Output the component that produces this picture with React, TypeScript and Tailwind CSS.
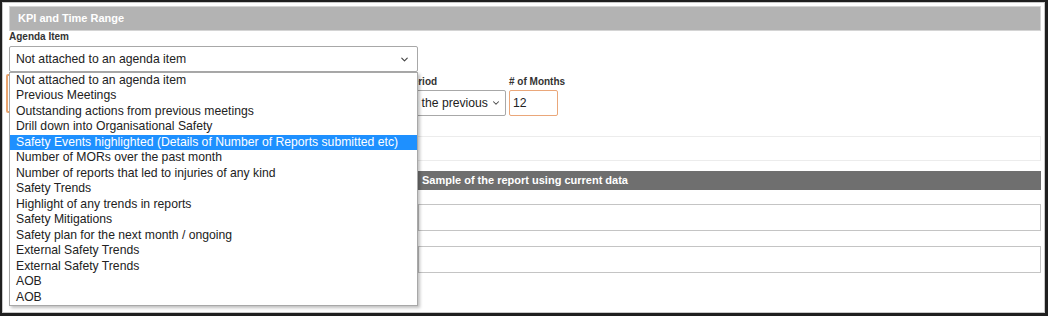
import { ChevronDown } from 'lucide-react';

const agendaItems = [
  'Not attached to an agenda item',
  'Previous Meetings',
  'Outstanding actions from previous meetings',
  'Drill down into Organisational Safety',
  'Safety Events highlighted (Details of Number of Reports submitted etc)',
  'Number of MORs over the past month',
  'Number of reports that led to injuries of any kind',
  'Safety Trends',
  'Highlight of any trends in reports',
  'Safety Mitigations',
  'Safety plan for the next month / ongoing',
  'External Safety Trends',
  'External Safety Trends',
  'AOB',
  'AOB',
];

const highlighted = 4;

function Label({ children }: { children: React.ReactNode }) {
  return <div className="h-[12px] leading-[12px] text-[10px] font-bold text-[#333] whitespace-nowrap">{children}</div>;
}

export default function App() {
  return (
    <div className="w-[1048px] h-[316px] bg-[#1f1f1f] pt-[2px] pl-[2px] pr-[3px] pb-[3px] font-['Liberation_Sans',Arial,sans-serif]">
      <div className="h-full bg-white border border-[#c8c8c8] pl-[6px] pr-[3px] pt-[3px]">
        {/* Section header */}
        <div className="h-[25px] bg-[#b3b3b3] border border-[#d4d4d4] pl-[8px] flex items-center text-[11px] font-bold text-white">
          KPI and Time Range
        </div>

        <Label>Agenda Item</Label>

        {/* Agenda select + open list */}
        <div className="relative w-[409px] mt-[3px] z-10">
          <div className="h-[26px] border border-[#a8a8a8] rounded-[2px] pl-[6px] pr-[7px] flex items-center justify-between text-[12.2px] text-[#222]">
            <span className="whitespace-nowrap">Not attached to an agenda item</span>
            <ChevronDown className="w-[11px] h-[11px] text-[#444]" strokeWidth={2.5} />
          </div>
          <div className="absolute left-0 top-full w-full bg-white border border-[#a8a8a8] shadow-[2px_2px_3px_rgba(0,0,0,0.25)]">
            {agendaItems.map((item, i) => (
              <div
                key={i}
                className={
                  i === highlighted
                    ? 'h-[15.47px] leading-[15.47px] pl-[6px] text-[12.2px] whitespace-nowrap bg-[#1e90ff] text-white'
                    : 'h-[15.47px] leading-[15.47px] pl-[6px] text-[12.2px] whitespace-nowrap text-[#222]'
                }
              >
                {item}
              </div>
            ))}
          </div>
        </div>

        {/* KPI / Period / Months row */}
        <div className="flex mt-[4px]">
          <div className="ml-[-3px] mt-[-2px] w-[300px] h-[39px] shrink-0 border-2 border-[#e9a46f] rounded-[2px]" />
          <div className="ml-[100px] w-[100px] shrink-0">
            <Label>Period</Label>
            <div className="mt-[2px] h-[26px] border border-[#a8a8a8] rounded-[2px] flex items-center justify-between pr-[4px] text-[12.2px] text-[#222]">
              <span className="pl-[1px] whitespace-nowrap">In the previous</span>
              <ChevronDown className="w-[10px] h-[10px] shrink-0 text-[#444]" strokeWidth={2.5} />
            </div>
          </div>
          <div className="ml-[3px] w-[49px] shrink-0">
            <Label># of Months</Label>
            <div className="mt-[2px] h-[26px] border border-[#eaa77a] rounded-[2px] pl-[3px] flex items-center text-[12.2px] text-[#222]">
              12
            </div>
          </div>
        </div>

        {/* Filter box */}
        <div className="mt-[20px] h-[25px] border border-[#ececec]" />

        {/* Sample section */}
        <div className="mt-[10px] flex">
          <div className="w-[409px] shrink-0" />
          <div className="flex-1">
            <div className="h-[19px] bg-[#6f6f6f] pl-[4px] flex items-center text-[11px] font-bold text-white">
              Sample of the report using current data
            </div>
            <div className="mt-[14px] h-[27px] border border-[#c4c4c4]" />
            <div className="mt-[15px] h-[27px] border border-[#c4c4c4]" />
          </div>
        </div>
      </div>
    </div>
  );
}
